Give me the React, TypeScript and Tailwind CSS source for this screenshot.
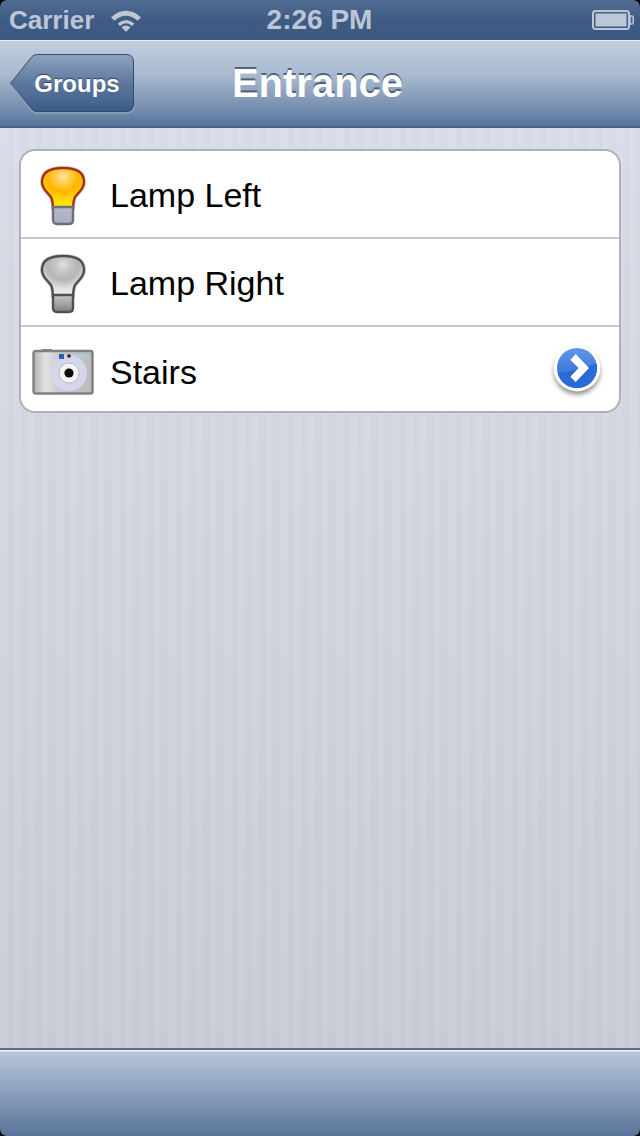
function WifiIcon() {
  return (
    <svg width="34" height="26" viewBox="0 0 34 26" className="block">
      <path d="M17 25 L12.5 20.2 Q17 16.6 21.5 20.2 Z" fill="#bcc6d6" />
      <path d="M8.6 16.4 Q17 9.4 25.4 16.4 L23 18.9 Q17 13.8 11 18.9 Z" fill="#bcc6d6" />
      <path d="M2 10.2 Q17 -2.6 32 10.2 L28.6 13.8 Q17 3.8 5.4 13.8 Z" fill="#bcc6d6" />
    </svg>
  )
}

function BatteryIcon() {
  return (
    <svg width="42" height="20" viewBox="0 0 42 20" className="block">
      <rect x="1" y="1" width="36" height="18" rx="2.5" fill="none" stroke="#bcc6d6" strokeWidth="2" />
      <rect x="3.5" y="3.5" width="31" height="13" fill="#bcc6d6" />
      <path d="M38 6 H40 Q41.2 6 41.2 7.5 V12.5 Q41.2 14 40 14 H38 Z" fill="none" stroke="#bcc6d6" strokeWidth="1.5" />
    </svg>
  )
}

function StatusBar() {
  return (
    <div className="flex h-10 items-center justify-between bg-[linear-gradient(#526d92,#3f5c84_50%,#3c5880)] pl-[9px] pr-[6px] font-['Liberation_Sans',sans-serif] font-bold leading-none text-[#bcc6d6]">
      <div className="flex w-[190px] items-center gap-[15px] text-[26px]">
        <span>Carrier</span>
        <WifiIcon />
      </div>
      <span className="mr-[4px] text-[28px]">2:26 PM</span>
      <div className="flex w-[190px] justify-end">
        <BatteryIcon />
      </div>
    </div>
  )
}

function BackButton() {
  return (
    <div className="relative ml-[10px] flex h-[60px] w-[125px] items-center justify-center pl-[9px]">
      <svg width="125" height="60" viewBox="0 0 125 60" className="absolute left-0 top-0">
        <defs>
          <linearGradient id="backFill" x1="0" y1="0" x2="0" y2="1">
            <stop offset="0" stopColor="#8fa3bf" />
            <stop offset="0.5" stopColor="#5d789e" />
            <stop offset="1" stopColor="#3b5b89" />
          </linearGradient>
        </defs>
        <path d="M0.5 29.5 L22 2.5 Q24 0.5 27 0.5 H116 Q123.5 0.5 123.5 8 V50 Q123.5 57.5 116 57.5 H27 Q24 57.5 22 55.5 Z" fill="url(#backFill)" stroke="#344a6b" strokeWidth="1" />
        <path d="M1.5 31 L22 57 Q24 59 27 59 H116 Q124 59 124.5 52" fill="none" stroke="#ffffff" strokeOpacity="0.3" strokeWidth="1" />
      </svg>
      <span className="relative font-['Liberation_Sans',sans-serif] text-[24px] font-bold leading-none text-white [text-shadow:0_-1px_1px_#2c4364]">
        Groups
      </span>
    </div>
  )
}

function NavBar() {
  return (
    <div className="relative flex h-[88px] items-center border-t border-t-[#e8edf3] border-b-2 border-b-[#45618a] bg-[linear-gradient(#c0cedf,#a9b9cf_40%,#6f88aa_85%,#577299)]">
      <BackButton />
      <div className="absolute inset-x-0 top-[20px] pr-[5px] text-center font-['Liberation_Sans',sans-serif] text-[40px] font-bold leading-[44px] text-white [text-shadow:0_-2px_0_rgba(40,58,88,0.7)]">
        Entrance
      </div>
    </div>
  )
}

function BulbIcon({ lit }: { lit: boolean }) {
  const id = lit ? 'bulbOn' : 'bulbOff'
  const head = 'M23 2 C36 2 44 6 44 16 C44 24 37 27 34.5 32 C33.5 35 33 38 33 42 H13 C13 38 12.5 35 11.5 32 C9 27 2 24 2 16 C2 6 10 2 23 2 Z'
  return (
    <svg width="46" height="60" viewBox="0 0 46 60" className="block blur-[0.5px]">
      <defs>
        <radialGradient id={id} cx="0.5" cy="0.22" r="0.82">
          <stop offset="0" stopColor={lit ? '#ffe4a0' : '#e2e2e2'} />
          <stop offset="0.2" stopColor={lit ? '#ffcf50' : '#c8c8c8'} />
          <stop offset="0.45" stopColor={lit ? '#ffb400' : '#b4b4b4'} />
          <stop offset="0.75" stopColor={lit ? '#ffe000' : '#e4e4e4'} />
          <stop offset="1" stopColor={lit ? '#fff000' : '#f0f0f0'} />
        </radialGradient>
        <linearGradient id={`${id}Base`} x1="0" y1="0" x2="0" y2="1">
          <stop offset="0" stopColor={lit ? '#b8bace' : '#c8c8c8'} />
          <stop offset="1" stopColor={lit ? '#a8aabe' : '#808080'} />
        </linearGradient>
      </defs>
      <path d={head} fill="none" stroke="#000000" strokeOpacity="0.2" strokeWidth="4" />
      <path d={head} fill={`url(#${id})`} stroke={lit ? '#a8301a' : '#505050'} strokeWidth="2.4" />
      <path d="M13 41 H33 V54 Q33 58 29 58 H17 Q13 58 13 54 Z" fill={`url(#${id}Base)`} stroke={lit ? '#6e6e74' : '#505050'} strokeWidth="2.4" />
    </svg>
  )
}

function CameraIcon() {
  return (
    <svg width="62" height="46" viewBox="0 0 62 46" className="block blur-[0.5px]">
      <defs>
        <linearGradient id="camBody" x1="0" y1="0" x2="1" y2="0">
          <stop offset="0" stopColor="#b0b0b0" />
          <stop offset="0.2" stopColor="#e2e2e2" />
          <stop offset="0.45" stopColor="#cacaca" />
          <stop offset="1" stopColor="#bcbcbc" />
        </linearGradient>
      </defs>
      <rect x="10" y="0" width="10" height="3" fill="#8a8a8a" />
      <rect x="1.5" y="2" width="59" height="42.5" rx="2" fill="url(#camBody)" stroke="#808080" strokeWidth="2.4" />
      <circle cx="37" cy="24" r="18" fill="#d6d6ea" />
      <circle cx="37" cy="24" r="10" fill="#f4f4f8" stroke="#b8b8c8" />
      <circle cx="37" cy="24" r="4.6" fill="#0c0c0c" />
      <rect x="27" y="5" width="5" height="5" fill="#1d5fb8" />
      <circle cx="37" cy="7" r="1.8" fill="#222222" />
      <path d="M43 9 L46 6 H56 L54 9 Z" fill="#a9cdf0" />
    </svg>
  )
}

function DetailButton() {
  return (
    <svg width="56" height="60" viewBox="0 0 56 60" className="block">
      <defs>
        <linearGradient id="detailFill" x1="0" y1="0" x2="0" y2="1">
          <stop offset="0" stopColor="#6297e6" />
          <stop offset="0.55" stopColor="#3f7bdc" />
          <stop offset="1" stopColor="#3a76da" />
        </linearGradient>
        <filter id="detailShadow" x="-30%" y="-30%" width="160%" height="160%">
          <feGaussianBlur stdDeviation="2.5" />
        </filter>
        <clipPath id="detailClip">
          <circle cx="28" cy="28" r="20" />
        </clipPath>
      </defs>
      <circle cx="28" cy="31.5" r="23" fill="#000000" fillOpacity="0.45" filter="url(#detailShadow)" />
      <circle cx="28" cy="28" r="23.4" fill="#ffffff" />
      <circle cx="28" cy="28" r="20" fill="url(#detailFill)" />
      <path d="M4 33 Q24 32 52 22 V52 H4 Z" fill="#2a69d6" clipPath="url(#detailClip)" />
      <path d="M26.7 14 L40 28 L26.7 42 L21.3 36.7 L29.7 28 L21.3 20 Z" fill="#ffffff" />
    </svg>
  )
}

const rows = [
  { label: 'Lamp Left', icon: <BulbIcon lit />, rowClass: 'h-[86px] pt-[2px]', iconClass: 'mt-[1px]' },
  { label: 'Lamp Right', icon: <BulbIcon lit={false} />, rowClass: 'h-[88px] pt-[2px] border-t-2 border-t-[#c8c9cb]', iconClass: 'mt-[1px]' },
  { label: 'Stairs', icon: <CameraIcon />, rowClass: 'h-[88px] pt-[4px] border-t-2 border-t-[#c8c9cb]', iconClass: '', detail: true },
]

function DeviceList() {
  return (
    <div className="h-[264px] rounded-[16px] border-2 border-[#adb1ba] bg-white">
      {rows.map((row) => (
        <div key={row.label} className={`flex items-center ${row.rowClass}`}>
          <div className={`flex w-[89px] shrink-0 justify-center pr-[5px] ${row.iconClass}`}>{row.icon}</div>
          <span className="flex-1 font-['Liberation_Sans',sans-serif] text-[34px] leading-none text-black">
            {row.label}
          </span>
          {row.detail && (
            <div className="-mt-[4px] mr-[14px]">
              <DetailButton />
            </div>
          )}
        </div>
      ))}
    </div>
  )
}

export default function App() {
  return (
    <div className="h-[1136px] w-[640px] bg-black">
      <div className="flex h-full flex-col overflow-hidden rounded-[7px]">
        <StatusBar />
        <NavBar />
        <div className="flex-1 bg-[repeating-linear-gradient(90deg,rgba(255,255,255,0.04)_0px,rgba(255,255,255,0.04)_7px,rgba(0,0,0,0.012)_7px,rgba(0,0,0,0.012)_14px),linear-gradient(#d9dde7,#c8ccd4)] px-[19px] pt-[21px]">
          <DeviceList />
        </div>
        <div className="h-[88px] border-t-2 border-t-[#5a6e8c] bg-[linear-gradient(#f0f3f7_0px,#f0f3f7_1px,#b6c6da_2px,#8fa3bf_45%,#5a7499)]" />
      </div>
    </div>
  )
}
